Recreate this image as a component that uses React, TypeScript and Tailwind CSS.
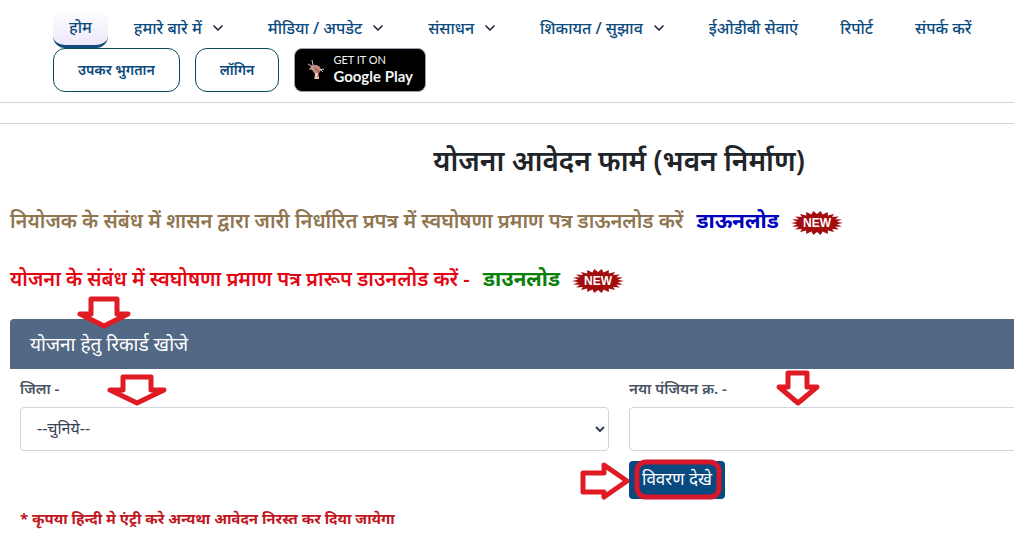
import { ChevronDown } from "lucide-react";
import type { ReactNode } from "react";

const links = [
  { label: "हमारे बारे में", menu: true },
  { label: "मीडिया / अपडेट", menu: true },
  { label: "संसाधन", menu: true },
  { label: "शिकायत / सुझाव", menu: true },
  { label: "ईओडीबी सेवाएं", menu: false },
  { label: "रिपोर्ट", menu: false },
  { label: "संपर्क करें", menu: false },
];

function burstPoints() {
  const count = 22;
  const points: string[] = [];
  for (let i = 0; i < count * 2; i++) {
    const angle = (i * Math.PI) / count;
    const outer = i % 2 === 0;
    const rx = outer ? 26 : 20;
    const ry = outer ? 12 : 9;
    points.push(`${(26 + rx * Math.cos(angle)).toFixed(1)},${(12 + ry * Math.sin(angle)).toFixed(1)}`);
  }
  return points.join(" ");
}

function NewBadge() {
  return (
    <svg viewBox="0 0 52 24" className="mt-1 ml-3 h-6 w-13 shrink-0" aria-label="NEW">
      <polygon points={burstPoints()} fill="#a30d0d" />
      <text x="26" y="16" textAnchor="middle" fontSize="12" fontWeight="700" fill="#fff" fontFamily="Liberation Sans, sans-serif">
        NEW
      </text>
    </svg>
  );
}

function Arrow({ className, viewBox, d }: { className: string; viewBox: string; d: string }) {
  return (
    <svg viewBox={viewBox} className={`pointer-events-none absolute ${className}`} aria-hidden="true">
      <path d={d} fill="#fff" stroke="#e01b24" strokeWidth="5" strokeLinejoin="round" />
    </svg>
  );
}

function PlayBadge() {
  return (
    <a href="#play" className="flex h-11 w-33 items-center gap-2 rounded-lg border border-gray-400 bg-black pl-2.5 text-gray-100">
      <svg viewBox="0 0 20 24" className="h-6 w-5 shrink-0" aria-hidden="true">
        <path d="M5 9 8 7l4 0 3 2 1 3-2 3 0 6H9l1-5-3-4z" fill="#c08a7e" />
        <path d="M7 2 8 7M3 6l5 3M4 11l4 0M15 12l4-1M15 11l3 3" fill="none" stroke="#d8c2bc" strokeWidth="1" />
        <path d="M10 15h4v6h-4z" fill="#efc4b8" />
        <path d="m10 10 4 4-1 5" fill="none" stroke="#8c332c" strokeWidth="1" />
      </svg>
      <span className="flex flex-col font-['Lato','Open_Sans',sans-serif]">
        <span className="text-[11px] leading-3 font-normal">GET IT ON</span>
        <span className="text-[15px] leading-5 font-bold">Google Play</span>
      </span>
    </a>
  );
}

function Notice({ children, className }: { children: ReactNode; className: string }) {
  return <p className={`flex h-[58px] items-center text-xl font-semibold ${className}`}>{children}</p>;
}

export default function App() {
  return (
    <div className="overflow-x-hidden bg-white font-['Noto_Sans','Noto_Sans_Devanagari',sans-serif] text-[#212529]">
      <header className="border-b border-gray-300 pt-2 pb-2.5 pl-[53px]">
        <nav className="flex h-10 gap-2.5 text-base font-medium whitespace-nowrap text-[#0b4a7d]">
          <a href="#home" className="flex items-center rounded-xl border-b-3 border-[#0f4c7c] bg-linear-to-b from-white to-[#eee8fa] px-4">
            होम
          </a>
          {links.map((link) => (
            <a key={link.label} href="#menu" className="flex items-center px-4">
              {link.label}
              {link.menu && <ChevronDown className="ml-2 size-4 text-gray-800" strokeWidth={2.5} />}
            </a>
          ))}
        </nav>
        <div className="flex gap-[15px] text-sm font-semibold text-[#0b4a7d]">
          <a href="#cess" className="flex h-11 items-center rounded-xl border border-[#0b4a5d] px-6">उपकर भुगतान</a>
          <a href="#login" className="flex h-11 items-center rounded-xl border border-[#0b4a5d] px-6">लॉगिन</a>
          <PlayBadge />
        </div>
      </header>
      <div className="h-[21px] border-b border-gray-300" />

      <main className="min-w-[1238px] px-2.5 pt-4">
        <h1 className="h-[52px] text-center text-[28px] leading-10 font-semibold">योजना आवेदन फार्म (भवन निर्माण)</h1>
        <Notice className="text-[#8f7650]">
          <span>
            नियोजक के संबंध में शासन द्वारा जारी निर्धारित प्रपत्र में स्वघोषणा प्रमाण पत्र डाऊनलोड करें{" "}
            <a href="#employer-form" className="ml-2 text-[21px] font-bold text-[#0000bf]">डाऊनलोड</a>
          </span>
          <NewBadge />
        </Notice>
        <Notice className="text-[#e30613]">
          <span>
            योजना के संबंध में स्वघोषणा प्रमाण पत्र प्रारूप डाउनलोड करें -{" "}
            <a href="#scheme-form" className="ml-2 text-[21px] font-bold text-[#0a800a]">डाउनलोड</a>
          </span>
          <NewBadge />
        </Notice>

        <section className="pt-[11px]">
          <h2 className="relative flex h-[50px] items-center rounded-t bg-[#526986] px-5 text-[19px] text-white">
            योजना हेतु रिकार्ड खोजे
            <Arrow className="-top-6 left-[66px] h-9 w-14" viewBox="0 0 56 36" d="M15 4H41V19H52L28 31 4 19H15Z" />
          </h2>
          <form className="grid grid-cols-2" onSubmit={(event) => event.preventDefault()}>
            <div className="relative px-2.5 pt-1.5">
              <label htmlFor="district" className="block h-8 text-[15px] leading-[26px] font-semibold text-gray-600">जिला -</label>
              <Arrow className="top-1 left-24 h-9 w-16" viewBox="0 0 64 36" d="M17 4H45V17H58L31 30 4 17H17Z" />
              <select id="district" className="h-11 w-full rounded border border-gray-300 bg-white px-3 pb-0.5 text-base text-gray-700">
                <option>--चुनिये--</option>
              </select>
            </div>
            <div className="relative px-2.5 pt-1.5">
              <label htmlFor="registration" className="block h-8 text-[15px] leading-[26px] font-semibold text-gray-600">नया पंजियन क्र. -</label>
              <Arrow className="top-0 left-[156px] h-10 w-12" viewBox="0 0 48 40" d="M13 4H32V18H42L23 34 4 18H13Z" />
              <input id="registration" type="text" className="h-11 w-full rounded border border-gray-300 px-3" />
            </div>
            <div className="relative col-start-2 px-2.5 pt-2.5">
              <button type="submit" className="relative h-[38px] rounded bg-[#084a80] px-[13px] pb-0.5 text-[17px] text-white">
                विवरण देखे
                <svg viewBox="0 0 96 42" className="pointer-events-none absolute -top-0.5 left-0 h-[42px] w-24" aria-hidden="true">
                  <rect x="8" y="3" width="82" height="35" rx="9" fill="none" stroke="#d7172a" strokeWidth="5" />
                </svg>
              </button>
              <Arrow className="top-2.5 -left-10 h-10 w-13" viewBox="0 0 52 40" d="M4 12H25V4L48 20 25 36V31H4Z" />
            </div>
          </form>
          <p className="px-2.5 pt-1.5 pb-3 text-[15px] leading-[26px] font-bold text-[#bf1722]">
            * कृपया हिन्दी मे एंट्री करे अन्यथा आवेदन निरस्त कर दिया जायेगा
          </p>
        </section>
      </main>
    </div>
  );
}
